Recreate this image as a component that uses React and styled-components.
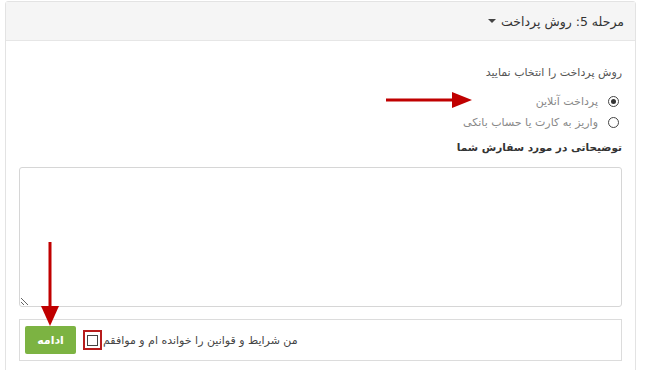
import styled, { createGlobalStyle } from "styled-components";

const GlobalStyle = createGlobalStyle`
  body {
    margin: 0;
    background: #ffffff;
    font-family: "DejaVu Sans", "Noto Sans", sans-serif;
  }
`;

const Page = styled.div`
  position: relative;
  width: 649px;
  height: 370px;
  overflow: hidden;
`;

const Panel = styled.div`
  direction: rtl;
  margin: 1px 0 0 5px;
  width: 629px;
  height: 380px;
  border: 1px solid #e3e3e3;
  border-radius: 3px 3px 0 0;
`;

const PanelHeader = styled.div`
  height: 38px;
  display: flex;
  align-items: center;
  padding-right: 11px;
  background: #f5f5f5;
  border-bottom: 1px solid #e6e6e6;
  font-size: 12.5px;
  color: #333;
`;

const Caret = styled.span`
  display: inline-block;
  margin-right: 5px;
  width: 0;
  height: 0;
  border-left: 4px solid transparent;
  border-right: 4px solid transparent;
  border-top: 4px solid #444;
`;

const PanelBody = styled.div`
  padding: 24px 13px 0 14px;
`;

const Prompt = styled.div`
  font-size: 11px;
  color: #555;
  line-height: 16px;
  margin-bottom: 12px;
`;

const OptionList = styled.div`
  display: flex;
  flex-direction: column;
  gap: 5px;
  margin-bottom: 9px;
`;

const Option = styled.label`
  display: flex;
  align-items: center;
  gap: 10px;
  padding-right: 3px;
  height: 16px;
  font-size: 11px;
  color: #888;
`;

const Radio = styled.span`
  position: relative;
  width: 11px;
  height: 11px;
  border: 1px solid #444;
  border-radius: 50%;
  box-sizing: border-box;
  flex-shrink: 0;
  &::after {
    content: "";
    display: ${(p) => (p.$checked ? "block" : "none")};
    position: absolute;
    inset: 2px;
    border-radius: 50%;
    background: #333;
  }
`;

const FieldLabel = styled.div`
  font-size: 10.5px;
  font-weight: bold;
  color: #333;
  line-height: 16px;
  margin-bottom: 12px;
`;

const TextArea = styled.textarea`
  display: block;
  box-sizing: border-box;
  width: 603px;
  height: 140px;
  border: 1px solid #d6d6d6;
  border-radius: 3px;
  resize: vertical;
  margin: 0 0 12px;
  font-family: inherit;
`;

const Footer = styled.div`
  box-sizing: border-box;
  width: 603px;
  height: 42px;
  border: 1px solid #dcdcdc;
  display: flex;
  align-items: center;
  padding-left: 5px;
  direction: ltr;
`;

const ContinueButton = styled.button`
  width: 51px;
  height: 28px;
  border: none;
  border-radius: 2px;
  background: #7cb342;
  color: #fff;
  font-family: inherit;
  font-size: 11px;
  font-weight: bold;
  margin-right: 7px;
`;

const CheckFrame = styled.span`
  box-sizing: border-box;
  width: 19px;
  height: 20px;
  border: 2px solid #b71c1c;
  display: flex;
  align-items: center;
  justify-content: center;
`;

const CheckBox = styled.span`
  box-sizing: border-box;
  width: 11px;
  height: 11px;
  border: 1px solid #444;
  background: #fff;
`;

const Agreement = styled.span`
  direction: rtl;
  font-size: 11px;
  color: #444;
  margin-left: 1px;
`;

const Arrow = styled.svg`
  position: absolute;
  left: ${(p) => p.$x}px;
  top: ${(p) => p.$y}px;
`;

export default function App() {
  return (
    <>
      <GlobalStyle />
      <Page>
        <Panel>
          <PanelHeader>
            مرحله 5: روش پرداخت
            <Caret />
          </PanelHeader>
          <PanelBody>
            <Prompt>روش پرداخت را انتخاب نمایید</Prompt>
            <OptionList>
              <Option>
                <Radio $checked />
                پرداخت آنلاین
              </Option>
              <Option>
                <Radio />
                واریز به کارت یا حساب بانکی
              </Option>
            </OptionList>
            <FieldLabel>توضیحاتی در مورد سفارش شما</FieldLabel>
            <TextArea />
            <Footer>
              <ContinueButton>ادامه</ContinueButton>
              <CheckFrame>
                <CheckBox />
              </CheckFrame>
              <Agreement>من شرایط و قوانین را خوانده ام و موافقم</Agreement>
            </Footer>
          </PanelBody>
        </Panel>

        <Arrow $x={386} $y={92} width="86" height="16" viewBox="0 0 86 16">
          <line x1="0" y1="8" x2="68" y2="8" stroke="#c00000" strokeWidth="3" />
          <polygon points="66,0 86,8 66,16" fill="#c00000" />
        </Arrow>
        <Arrow $x={40} $y={242} width="20" height="84" viewBox="0 0 20 84">
          <line x1="10" y1="0" x2="10" y2="66" stroke="#c00000" strokeWidth="3" />
          <polygon points="1,64 19,64 10,84" fill="#c00000" />
        </Arrow>
      </Page>
    </>
  );
}
